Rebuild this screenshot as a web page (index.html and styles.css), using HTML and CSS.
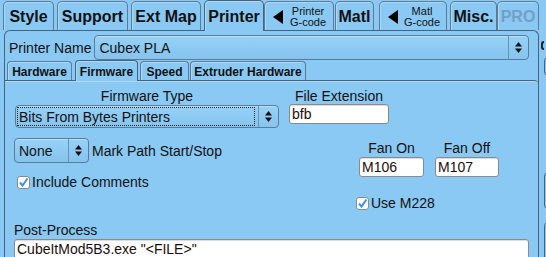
FILE: index.html
```html
<!DOCTYPE html>
<html lang="en">
<head>
  <meta charset="UTF-8" />
  <title>Printer - Firmware</title>
  <link rel="stylesheet" href="styles.css">
</head>
<body>

  <div class="window">
    <div class="main">
      <div class="tabs">
        <div class="tab tab-style">Style</div>
        <div class="tab tab-support">Support</div>
        <div class="tab tab-extmap">Ext Map</div>
        <div class="tab tab-printer active">Printer</div>
        <div class="tab tab-pgcode">
          <svg class="tri" width="10" height="14" viewBox="0 0 10 14"><polygon points="10,0 10,14 0,7" fill="#000"/></svg>
          <span class="small-text"><span class="small-line">Printer</span><span class="small-line">G-code</span></span>
        </div>
        <div class="tab tab-matl">Matl</div>
        <div class="tab tab-mgcode">
          <svg class="tri" width="10" height="14" viewBox="0 0 10 14"><polygon points="10,0 10,14 0,7" fill="#000"/></svg>
          <span class="small-text"><span class="small-line">Matl</span><span class="small-line">G-code</span></span>
        </div>
        <div class="tab tab-misc">Misc.</div>
        <div class="tab tab-pro disabled">PRO</div>
      </div>

      <div class="panel">
        <div class="name-row">
          <span class="label">Printer Name</span>
          <div class="select select-name">
            <span class="select-text">Cubex PLA</span>
            <span class="select-arrows">
              <svg width="7" height="11" viewBox="0 0 7 11"><polygon points="0,4.5 3.5,0 7,4.5" fill="#111"/><polygon points="0,6.5 3.5,11 7,6.5" fill="#111"/></svg>
            </span>
          </div>
        </div>

        <div class="subtabs">
          <div class="subtab sub-hardware">Hardware</div>
          <div class="subtab sub-firmware active">Firmware</div>
          <div class="subtab sub-speed">Speed</div>
          <div class="subtab sub-extruder">Extruder Hardware</div>
        </div>

        <div class="subpanel">
          <div class="row row-a">
            <div class="field field-firmware">
              <div class="label centered">Firmware Type</div>
              <div class="select select-firmware">
                <span class="select-text focus">Bits From Bytes Printers</span>
                <span class="select-arrows">
                  <svg width="7" height="11" viewBox="0 0 7 11"><polygon points="0,4.5 3.5,0 7,4.5" fill="#111"/><polygon points="0,6.5 3.5,11 7,6.5" fill="#111"/></svg>
                </span>
              </div>
            </div>
            <div class="field field-ext">
              <div class="label centered">File Extension</div>
              <div class="input input-ext">bfb</div>
            </div>
          </div>

          <div class="row row-b">
            <div class="col-left">
              <div class="inline-row">
                <div class="select select-none">
                  <span class="select-text">None</span>
                  <span class="select-arrows">
                    <svg width="7" height="11" viewBox="0 0 7 11"><polygon points="0,4.5 3.5,0 7,4.5" fill="#111"/><polygon points="0,6.5 3.5,11 7,6.5" fill="#111"/></svg>
                  </span>
                </div>
                <span class="label mark-label">Mark Path Start/Stop</span>
              </div>
              <div class="check-row check-comments">
                <span class="checkbox">
                  <svg width="11" height="11" viewBox="0 0 11 11"><polyline points="2,5.5 4.5,8.5 9.5,1.5" fill="none" stroke="#3d93e8" stroke-width="2"/></svg>
                </span>
                <span class="label">Include Comments</span>
              </div>
            </div>
            <div class="col-right">
              <div class="fan-group">
                <div class="fan-col fan-on">
                  <div class="label centered">Fan On</div>
                  <div class="input">M106</div>
                </div>
                <div class="fan-col fan-off">
                  <div class="label centered">Fan Off</div>
                  <div class="input">M107</div>
                </div>
              </div>
              <div class="check-row check-m228">
                <span class="checkbox">
                  <svg width="11" height="11" viewBox="0 0 11 11"><polyline points="2,5.5 4.5,8.5 9.5,1.5" fill="none" stroke="#3d93e8" stroke-width="2"/></svg>
                </span>
                <span class="label">Use M228</span>
              </div>
            </div>
          </div>

          <div class="row-c">
            <div class="label">Post-Process</div>
            <div class="input input-post">CubeItMod5B3.exe "&lt;FILE&gt;"</div>
          </div>
        </div>
      </div>
    </div>

    <div class="side">
      <div class="side-mark"></div>
      <div class="side-box box-1"></div>
      <div class="side-box box-2"></div>
      <div class="side-box box-3"></div>
    </div>
  </div>

</body>
</html>
```

FILE: styles.css
```css
html, body {
  margin: 0;
  overflow: hidden;
}

body {
  background: #8ac9f3;
  font-family: "Liberation Sans", Arial, sans-serif;
  color: #111;
  width: 546px;
  height: 257px;
}

.window {
  display: flex;
  height: 257px;
}

.main {
  width: 539px;
  flex: none;
  display: flex;
  flex-direction: column;
}

/* top tabs */
.tabs {
  display: flex;
  align-items: flex-end;
  height: 32px;
  padding-left: 3px;
}

.tab {
  box-sizing: border-box;
  height: 29px;
  border: 1px solid #5b7b96;
  border-bottom: none;
  border-radius: 5px 5px 0 0;
  box-shadow: inset 1px 1px 0 rgba(255, 255, 255, 0.3);
  display: flex;
  align-items: center;
  justify-content: center;
  padding-top: 2px;
  font-size: 16px;
  font-weight: bold;
  flex: none;
}

.tab.active {
  height: 31px;
  margin-bottom: -1px;
  position: relative;
  z-index: 1;
  background: #8ac9f3;
  border-color: #47647e;
  padding-top: 1px;
}

.tab.disabled {
  color: #73a0c4;
}

.tab-style { width: 51px; }
.tab-support { width: 71px; margin-left: 3px; }
.tab-extmap { width: 70px; margin-left: 3px; }
.tab-printer { width: 60px; margin-left: 3px; }
.tab-pgcode { width: 70px; }
.tab-matl { width: 39px; margin-left: 1px; }
.tab-mgcode { width: 68px; margin-left: 5px; }
.tab-misc { width: 47px; margin-left: 3px; }
.tab-pro { width: 42px; }

.tab-pgcode, .tab-mgcode {
  justify-content: flex-start;
  padding-left: 8px;
  padding-top: 1px;
}

.tri {
  flex: none;
}

.small-text {
  flex: 1;
  display: flex;
  flex-direction: column;
  align-items: center;
  font-size: 11px;
  font-weight: normal;
}

.small-line {
  line-height: 11px;
  height: 11px;
}

/* outer panel */
.panel {
  flex: 1;
  margin-left: 4px;
  width: 535px;
  box-sizing: border-box;
  border: 1px solid #47647e;
  border-bottom: none;
  border-radius: 6px 6px 0 0;
  padding-top: 4px;
  display: flex;
  flex-direction: column;
}

.label {
  font-size: 14px;
  line-height: 16px;
  white-space: nowrap;
}

.centered {
  text-align: center;
}

.name-row {
  display: flex;
  align-items: center;
  padding: 0 9px 0 4px;
}

/* selects */
.select {
  box-sizing: border-box;
  display: flex;
  align-items: center;
  border: 1px solid #5b7b96;
  border-radius: 4px;
  background: linear-gradient(#97d1f7, #85c4ee);
  box-shadow: inset 0 1px 0 rgba(255, 255, 255, 0.35);
  font-size: 14px;
}

.select-text {
  flex: 1;
  padding-left: 4px;
  white-space: nowrap;
}

.select-arrows {
  width: 19px;
  align-self: stretch;
  border-left: 1px solid #6f90ab;
  display: flex;
  align-items: center;
  justify-content: center;
  flex: none;
}

.select-name {
  flex: 1;
  height: 25px;
  margin-left: 3px;
}

.select-firmware {
  height: 23px;
  margin-top: 2px;
}

.select-firmware .select-text.focus {
  align-self: stretch;
  display: flex;
  align-items: center;
  border: 1px dotted #222;
  margin: 1px 3px 1px 1px;
  padding-left: 1px;
}

.select-none {
  width: 75px;
  height: 25px;
}

/* sub tabs */
.subtabs {
  display: flex;
  align-items: flex-end;
  height: 20px;
  padding-left: 2px;
}

.subtab {
  box-sizing: border-box;
  height: 19px;
  border: 1px solid #5b7b96;
  border-bottom: none;
  border-radius: 4px 4px 0 0;
  box-shadow: inset 1px 1px 0 rgba(255, 255, 255, 0.3);
  font-size: 12px;
  font-weight: bold;
  display: flex;
  align-items: center;
  justify-content: center;
  padding-top: 2px;
  flex: none;
}

.subtab.active {
  height: 21px;
  margin-bottom: -1px;
  position: relative;
  z-index: 1;
  background: #8ac9f3;
  border-color: #47647e;
}

.sub-hardware { width: 65px; }
.sub-firmware { width: 63px; margin-left: 3px; }
.sub-speed { width: 49px; margin-left: 2px; }
.sub-extruder { width: 116px; margin-left: 1px; }

/* sub panel */
.subpanel {
  flex: 1;
  border-top: 1px solid #47647e;
  border-top-right-radius: 4px;
  box-shadow: inset 0 1px 0 rgba(255, 255, 255, 0.3);
  padding: 7px 0 0 9px;
}

.row {
  display: flex;
  align-items: flex-start;
}

.field-firmware {
  width: 264px;
  margin-left: 1px;
}

.field-firmware .select {
  margin-top: 1px;
}

.field-ext {
  width: 100px;
  margin-left: 10px;
}

.input {
  box-sizing: border-box;
  height: 20px;
  background: #fff;
  border: 1px solid #8a8a8a;
  border-radius: 3px;
  box-shadow: inset 0 1px 1px rgba(0, 0, 0, 0.15);
  font-size: 14px;
  line-height: 18px;
  padding-left: 2px;
  color: #1c0d0d;
  white-space: nowrap;
}

.input-ext {
  margin-top: 0;
}

.row-b {
  margin-top: 10px;
}

.col-left {
  width: 342px;
}

.inline-row {
  display: flex;
  align-items: center;
}

.mark-label {
  margin-left: 3px;
}

.check-row {
  display: flex;
  align-items: center;
}

.checkbox {
  box-sizing: border-box;
  width: 13px;
  height: 13px;
  background: #fff;
  border: 1px solid #8a8a8a;
  border-radius: 3px;
  display: flex;
  align-items: center;
  justify-content: center;
  margin-right: 2px;
  flex: none;
}

.check-comments {
  margin-top: 11px;
  margin-left: 3px;
}

.fan-group {
  display: flex;
  margin-left: 3px;
  margin-top: 2px;
}

.fan-on { width: 65px; }
.fan-off { width: 64px; margin-left: 11px; }

.fan-col .input {
  margin-top: 1px;
}

.check-m228 {
  margin-top: 18px;
}

.row-c {
  margin-top: 11px;
}

.input-post {
  width: 515px;
  height: 21px;
  margin-top: 1px;
}

/* clipped column on the right */
.side {
  width: 7px;
  flex: none;
  overflow: hidden;
  padding-top: 41px;
}

.side-mark {
  width: 3px;
  height: 9px;
  margin-left: 2px;
  border-top: 2px solid #222;
  border-bottom: 2px solid #222;
  border-left: 2px solid #222;
  border-radius: 3px 0 0 3px;
  box-sizing: border-box;
}

.side-box {
  box-sizing: border-box;
  width: 40px;
  margin-left: 5px;
  border: 1px solid #47647e;
  border-radius: 4px;
}

.box-1 { height: 19px; margin-top: 7px; }
.box-2 { height: 37px; margin-top: 96px; }
.box-3 { height: 60px; margin-top: 13px; }
```
